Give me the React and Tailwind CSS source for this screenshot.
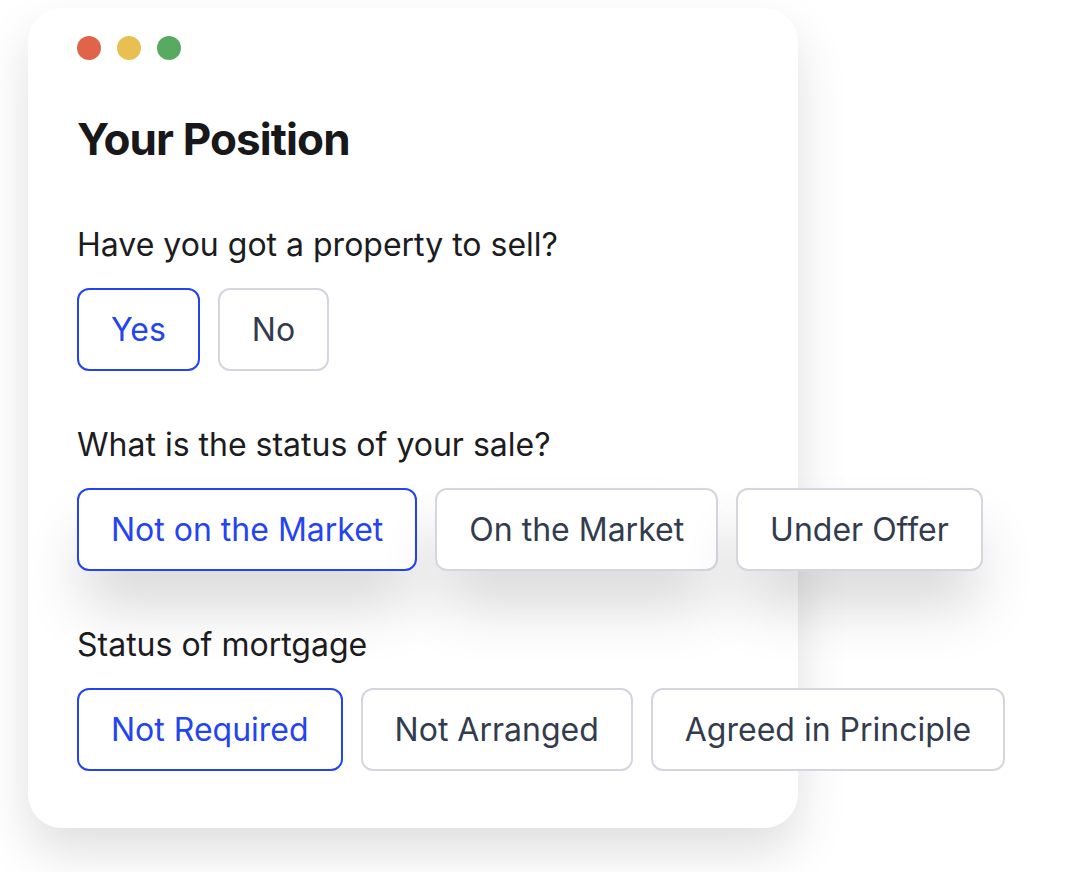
import { useState } from "react";

const questions = [
  {
    id: "sell",
    label: "Have you got a property to sell?",
    options: ["Yes", "No"],
    raised: false,
  },
  {
    id: "sale",
    label: "What is the status of your sale?",
    options: ["Not on the Market", "On the Market", "Under Offer"],
    raised: true,
  },
  {
    id: "mortgage",
    label: "Status of mortgage",
    options: ["Not Required", "Not Arranged", "Agreed in Principle"],
    raised: false,
  },
];

const Choice = ({ text, active, raised, onClick }) => (
  <button
    onClick={onClick}
    className={`h-[83px] shrink-0 rounded-[12px] border-2 bg-white px-[32px] text-[32px] whitespace-nowrap ${
      active ? "border-[#2444f2] text-[#2444f2]" : "border-[#d4d6de] text-[#333c4e]"
    } ${raised ? "shadow-[0_40px_60px_-6px_rgba(0,0,0,0.16)]" : ""}`}
  >
    {text}
  </button>
);

export default function App() {
  const [answers, setAnswers] = useState({
    sell: "Yes",
    sale: "Not on the Market",
    mortgage: "Not Required",
  });

  return (
    <div className="min-h-screen bg-white pl-[28px] pt-[8px] font-['Inter',sans-serif] overflow-hidden">
      <div className="w-[770px] h-[820px] rounded-[34px] bg-white pl-[49px] pt-[28px] shadow-[0_24px_50px_rgba(0,0,0,0.13)]">
        <div className="flex gap-4">
          <span className="w-6 h-6 rounded-full bg-[#e0644a]"></span>
          <span className="w-6 h-6 rounded-full bg-[#e8c052]"></span>
          <span className="w-6 h-6 rounded-full bg-[#58aa61]"></span>
        </div>

        <h1 className="mt-[53px] text-[44px] leading-[52px] font-bold tracking-[-0.02em] text-[#18181b]">
          Your Position
        </h1>

        <div className="mt-[60px]">
          {questions.map((q, i) => (
            <div key={q.id} className={i > 0 ? "mt-[54px]" : ""}>
              <p className="text-[32px] leading-[40px] text-[#1c1c1f]">{q.label}</p>
              <div className="mt-[23px] flex gap-[18px]">
                {q.options.map((o) => (
                  <Choice
                    key={o}
                    text={o}
                    active={answers[q.id] === o}
                    raised={q.raised}
                    onClick={() => setAnswers((prev) => ({ ...prev, [q.id]: o }))}
                  />
                ))}
              </div>
            </div>
          ))}
        </div>
      </div>
    </div>
  );
}
